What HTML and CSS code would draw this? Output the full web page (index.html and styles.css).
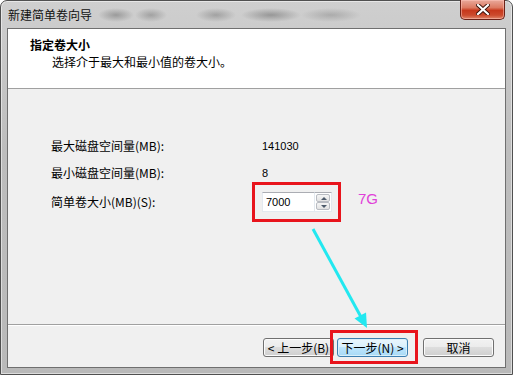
FILE: index.html
```html
<!DOCTYPE html>
<html lang="zh-CN">

<head>
    <meta charset="UTF-8">
    <title>新建简单卷向导</title>
    <link rel="stylesheet" href="styles.css">
</head>

<body>
    <div class="window">
        <div class="titlebar">
            <span class="title">新建简单卷向导</span>
            <button class="close-btn" title="关闭">
                <svg width="14" height="11" viewBox="0 0 14 11">
                    <path d="M2 1 L12 10 M12 1 L2 10" stroke="#3a1008" stroke-width="4" stroke-linecap="square" />
                    <path d="M2 1 L12 10 M12 1 L2 10" stroke="#ffffff" stroke-width="2.2" stroke-linecap="square" />
                </svg>
            </button>
        </div>

        <div class="client">
            <div class="header">
                <h1>指定卷大小</h1>
                <p>选择介于最大和最小值的卷大小。</p>
            </div>

            <div class="content">
                <div class="row">
                    <label>最大磁盘空间量(MB):</label>
                    <span class="value">141030</span>
                </div>
                <div class="row">
                    <label>最小磁盘空间量(MB):</label>
                    <span class="value">8</span>
                </div>
                <div class="row row-input">
                    <label for="size">简单卷大小(MB)(S):</label>
                    <div class="mark mark-input">
                        <div class="spin">
                            <input type="text" id="size" value="7000">
                            <div class="spin-btns">
                                <span class="spin-up"></span>
                                <span class="spin-down"></span>
                            </div>
                        </div>
                    </div>
                    <span class="note">7G</span>
                </div>
            </div>

            <div class="footer">
                <button class="btn btn-back">&lt; 上一步(B)</button>
                <div class="mark mark-btn">
                    <button class="btn btn-default">下一步(N) &gt;</button>
                </div>
                <button class="btn">取消</button>
            </div>
        </div>

        <!-- annotation arrow -->
        <svg class="arrow" width="513" height="375" viewBox="0 0 513 375">
            <line x1="313" y1="229" x2="361" y2="317" stroke="#22e8f0" stroke-width="3" />
            <polygon points="367,328 354.5,318.5 366,312.5" fill="#22e8f0" />
        </svg>
    </div>
</body>

</html>
```

FILE: styles.css
```css
* {
    box-sizing: border-box;
}

body {
    margin: 0;
    background: #ffffff;
    font-family: "Noto Sans CJK SC", "Liberation Sans", sans-serif;
    font-size: 12px;
    color: #000;
}

.window {
    position: relative;
    width: 513px;
    height: 375px;
    display: flex;
    flex-direction: column;
    border: 1px solid #505050;
    border-radius: 7px 7px 0 0;
    background:
        radial-gradient(ellipse 18px 7px at 115px 14px, rgba(60, 60, 60, 0.35), transparent),
        radial-gradient(ellipse 16px 7px at 150px 14px, rgba(60, 60, 60, 0.3), transparent),
        radial-gradient(ellipse 20px 7px at 215px 14px, rgba(60, 60, 60, 0.3), transparent),
        radial-gradient(ellipse 30px 7px at 270px 14px, rgba(50, 50, 50, 0.35), transparent),
        radial-gradient(ellipse 30px 7px at 330px 14px, rgba(70, 70, 70, 0.25), transparent),
        linear-gradient(#cfcfcf, #bdbdbd 40%, #b9b9b9);
    box-shadow: inset 0 0 0 1px rgba(255, 255, 255, 0.5);
}

/* title bar */

.titlebar {
    height: 27px;
    display: flex;
    align-items: flex-start;
    justify-content: space-between;
    padding: 0 7px 0 7px;
}

.title {
    margin-top: 6px;
    font-size: 12px;
    line-height: 16px;
    color: #111;
}

.close-btn {
    width: 45px;
    height: 20px;
    margin-top: -1px;
    padding: 0;
    display: flex;
    align-items: center;
    justify-content: center;
    border: 1px solid #6b2117;
    border-top: none;
    border-radius: 0 0 5px 5px;
    background: linear-gradient(#e9a99b, #dc7a62 40%, #c7381c 55%, #cc4a2d 80%, #e0866a);
    box-shadow: inset 0 0 0 1px rgba(255, 200, 190, 0.5);
}

/* client area */

.client {
    flex: 1;
    margin: 0 6px 6px;
    display: flex;
    flex-direction: column;
    border: 1px solid #6f6f6f;
    background: #f0f0f0;
}

.header {
    height: 60px;
    padding: 8px 0 0 22px;
    background: #ffffff;
    border-bottom: 1px solid #a0a0a0;
}

.header h1 {
    margin: 0;
    font-size: 12px;
    line-height: 16px;
    font-weight: bold;
}

.header p {
    margin: 1px 0 0 22px;
    font-size: 12px;
    line-height: 16px;
}

.content {
    flex: 1;
    padding: 48px 0 0 43px;
    display: flex;
    flex-direction: column;
    gap: 9px;
    border-bottom: 1px solid #a0a0a0;
    box-shadow: 0 1px 0 #ffffff;
}

.row {
    display: flex;
    align-items: center;
    height: 18px;
}

.row-input {
    height: 20px;
    margin-top: 1px;
}

.row label {
    width: 211px;
    line-height: 16px;
}

.value {
    font-family: "Liberation Sans", sans-serif;
    font-size: 11px;
}

/* annotation frames */

.mark {
    position: relative;
}

.mark::after {
    content: "";
    position: absolute;
    border: 3px solid #e8141c;
}

.mark-input::after {
    inset: -10px -9px -10px -10px;
}

.mark-btn::after {
    inset: -8px -10px -7px -7px;
}

.note {
    margin-left: 26px;
    margin-bottom: 7px;
    font-family: "Liberation Sans", sans-serif;
    font-size: 15px;
    color: #e040d8;
}

/* spin box */

.spin {
    display: flex;
    height: 20px;
}

.spin input {
    width: 53px;
    height: 20px;
    padding: 0 0 0 3px;
    border: 1px solid #e3e9ef;
    border-top-color: #abadb3;
    font-family: "Liberation Sans", sans-serif;
    font-size: 11px;
    color: #000;
    background: #fff;
    outline: none;
}

.spin-btns {
    width: 17px;
    display: flex;
    flex-direction: column;
    padding: 1px;
    background: #fff;
    border: 1px solid #e3e9ef;
    border-left: none;
    border-top-color: #abadb3;
}

.spin-btns span {
    flex: 1;
    position: relative;
    border: 1px solid #b9bcc2;
    border-radius: 2px;
    background: linear-gradient(#f6f6f6, #e2e2e2);
}

.spin-btns span::after {
    content: "";
    position: absolute;
    left: 4px;
    top: 2px;
    border-left: 3px solid transparent;
    border-right: 3px solid transparent;
}

.spin-up::after {
    border-bottom: 3px solid #4d5a6a;
}

.spin-down::after {
    border-top: 3px solid #4d5a6a;
}

/* footer buttons */

.footer {
    height: 42px;
    padding: 13px 11px 0 0;
    display: flex;
    justify-content: flex-end;
    align-items: flex-start;
}

.btn {
    width: 71px;
    height: 19px;
    padding: 0;
    border: 1px solid #707070;
    border-radius: 3px;
    background: linear-gradient(#f2f2f2 0%, #ebebeb 50%, #dddddd 50%, #cfcfcf 100%);
    box-shadow: inset 0 0 0 1px #fbfbfb;
    font-family: "Noto Sans CJK SC", sans-serif;
    font-size: 12px;
    line-height: 16px;
    color: #000;
}

.btn-back {
    margin-right: 3px;
}

.mark-btn {
    margin-right: 15px;
}

.btn-default {
    border-color: #3c7fb1;
    background: linear-gradient(#eaf6fd 0%, #d9f0fc 50%, #bee6fd 50%, #a7d9f5 100%);
    box-shadow: inset 0 0 0 1px #d8f0fb;
}

/* annotation arrow */

.arrow {
    position: absolute;
    left: -1px;
    top: -1px;
    pointer-events: none;
}
```
